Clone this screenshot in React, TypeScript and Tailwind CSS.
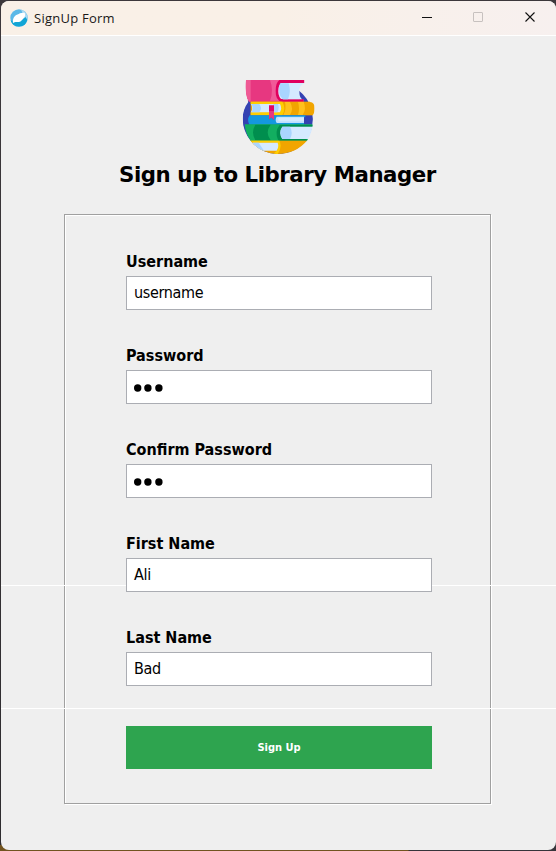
import type { ReactNode } from "react";

function AppIcon() {
  return (
    <svg className="h-[18px] w-[18px]" viewBox="0 0 18 18">
      <circle cx="9" cy="9" r="8.7" fill="#5cb9e8" />
      <path d="M11 .6A8.7 8.7 0 0 1 17.4 10L14 9 12.5 4Z" fill="#a9d9f4" />
      <path d="M.6 11.5A8.7 8.7 0 0 0 17.3 11L15.5 8 11 12 5 12Z" fill="#12a5d5" />
      <path d="M3 14.2C2.4 10 4 6.8 7.5 5.4C9.5 4.4 11.5 3.2 14.6 3.8C15.6 6 15.2 7.6 13.8 9C12.2 10.4 11.4 12.6 9 13C7 13.3 5 12.4 3 14.2Z" fill="#fff" />
    </svg>
  );
}

function BooksLogo() {
  return (
    <svg className="h-[95px] w-[100px]" viewBox="0 0 300 285">
      <defs>
        <clipPath id="badge">
          <path d="M48 30H223V65Q238 78 240 96Q254 97 254 114Q254 130 248 136Q252 180 232 211Q198 252 142 252Q91 250 62 212Q38 184 38 145Q39 117 55 96Q44 76 48 30Z" />
        </clipPath>
      </defs>
      <g clipPath="url(#badge)">
        <circle cx="143" cy="147" r="106" fill="#3442b2" />
        <rect x="130" y="30" width="78" height="66" fill="#efefef" />
        <path d="M46 30H223V39H150V88H221V96H58Q45 82 46 30Z" fill="#e73780" />
        <path d="M48 30H62V94H56Q44 76 48 30Z" fill="#ef5994" />
        <path d="M120 30H150V92H120Q132 62 120 30Z" fill="#f05a98" />
        <path d="M148 30H223V39H160Q143 42 145 65Q145 88 162 88H220V95H155Q136 91 137 62Q137 38 148 30Z" fill="#e0005e" />
        <path d="M154 39H223Q207 48 207 64Q207 79 216 88H160Q145 86 145 64Q145 45 154 39Z" fill="#d5eaff" />
        <path d="M150 40H176Q184 63 174 88H158Q142 74 150 40Z" fill="#a9d5ff" />
        <rect x="62" y="95" width="192" height="41" fill="#f1a500" />
        <path d="M165 96H180Q192 116 180 135H160Q170 116 165 96Z" fill="#ffc11c" />
        <path d="M204 96H221Q230 116 218 135H204Q210 116 204 96Z" fill="#ffc11c" />
        <path d="M62 95H157Q169 115 157 136H62V127H150Q155 115 149 102H62Z" fill="#ffce00" />
        <path d="M63 102H150Q157 115 150 127H63Q70 115 63 102Z" fill="#d5eaff" />
        <path d="M64 102H88Q98 115 88 127H64Q72 115 64 102ZM130 102H144Q149 115 142 127H130Z" fill="#a9d5ff" />
        <path d="M59 136H226V142H143V157H222V164H58Q50 149 59 136Z" fill="#1498df" />
        <path d="M140 140H222V159H140Q134 149 140 140Z" fill="#bde0ff" />
        <path d="M145 143H222V154H145Z" fill="#d5eaff" />
        <path d="M117 106H132V149L124 142 117 148Z" fill="#df0869" />
        <path d="M117 123H132V149L124 142 117 148Z" fill="#e73780" />
        <path d="M44 163H248V170H160Q148 187 160 207H240V214H62Q46 189 44 163Z" fill="#12ae60" />
        <path d="M76 164H122Q104 188 122 211H76Q62 188 76 164Z" fill="#008e4e" />
        <path d="M149 165H248V170H161Q143 187 160 206H230V212H145Q132 186 149 165Z" fill="#008e4e" />
        <path d="M157 170H248V207H157Q145 188 157 170Z" fill="#d5eaff" />
        <path d="M157 170H180Q190 188 180 207H157Q145 188 157 170Z" fill="#a9d5ff" />
        <rect x="56" y="212" width="185" height="43" fill="#f1a500" />
        <path d="M60 212H148Q158 230 143 252H130L140 242Q149 229 141 218H65Z" fill="#ffce00" />
        <path d="M67 218H143Q148 231 140 242H90Z" fill="#d5eaff" />
        <path d="M67 218H86Q94 230 102 242H87Z" fill="#a9d5ff" />
      </g>
    </svg>
  );
}

function Field({ label, children }: { label: string; children: ReactNode }) {
  return (
    <div className="flex h-[94px] flex-col">
      <div className="h-[25px] text-[16px] leading-[22px] font-bold whitespace-nowrap">{label}</div>
      <div className="flex h-[34px] items-center border border-[#abadb3] bg-white pl-[7px] text-[16px] tracking-[-0.35px]">
        {children}
      </div>
    </div>
  );
}

function Dots() {
  return (
    <svg className="mt-[2px] h-[8px] w-[30px]" viewBox="0 0 30 8">
      <circle cx="3.7" cy="4" r="3.7" />
      <circle cx="13.9" cy="4" r="3.7" />
      <circle cx="24.9" cy="4" r="3.7" />
    </svg>
  );
}

export default function App() {
  return (
    <div className="h-[851px] w-[556px] overflow-hidden bg-[linear-gradient(to_right,#71531f_408px,#36343a_409px)]">
      <div className="h-[845px] bg-[linear-gradient(#3c373b,#2e2c2f)] pt-px pl-px text-black">
        <div className="relative flex h-[849px] w-[555px] flex-col overflow-hidden rounded-lg bg-[#efefef]">
          <header className="flex h-[35px] shrink-0 items-center border-b border-white bg-linear-to-r from-[#f9f0e7] via-[#f9f0e7] to-[#f7f0ef] pl-[9px]">
            <AppIcon />
            <span className="mt-px ml-[6px] font-['Open_Sans',sans-serif] text-[13px] tracking-[0.25px] text-[#191919]">SignUp Form</span>
            <svg className="mr-px ml-auto h-[34px] w-[136px]" viewBox="0 0 136 34" fill="none">
              <path d="M3 16.5H13" stroke="#111" />
              <rect x="54.5" y="11.5" width="9" height="9" rx=".5" stroke="#c7c1bf" />
              <path d="M106.5 11.5L115.5 20.5M115.5 11.5L106.5 20.5" stroke="#111" strokeWidth="1.1" />
            </svg>
          </header>
          <main className="flex flex-col pt-[34px]">
            <div className="pl-[229px]"><BooksLogo /></div>
            <h1 className="-mt-[4px] h-[53px] pl-[118px] font-['DejaVu_Sans',sans-serif] text-[21.3px] leading-[28px] font-bold tracking-[-0.45px] whitespace-nowrap">
              Sign up to Library Manager
            </h1>
            <section className="ml-[63px] h-[590px] w-[427px] border border-[#a0a0a0] pt-[36px] pl-[61px] font-['DejaVu_Sans_Condensed','Noto_Sans',sans-serif] shadow-[1px_1px_0_#fff,inset_1px_1px_0_#fff]">
              <div className="w-[306px]">
                <Field label="Username">username</Field>
                <Field label="Password"><Dots /></Field>
                <Field label="Confirm Password"><Dots /></Field>
                <div className="relative z-10"><Field label="First Name">Ali</Field></div>
                <Field label="Last Name">Bad</Field>
                <button className="mt-[5px] block h-[43px] w-full bg-[#2ea44f] pt-[2px] text-[11px] font-bold text-white">Sign Up</button>
              </div>
            </section>
          </main>
          <div className="absolute top-[584px] h-px w-full bg-white" />
          <div className="absolute top-[707px] h-px w-full bg-white" />
        </div>
      </div>
    </div>
  );
}
